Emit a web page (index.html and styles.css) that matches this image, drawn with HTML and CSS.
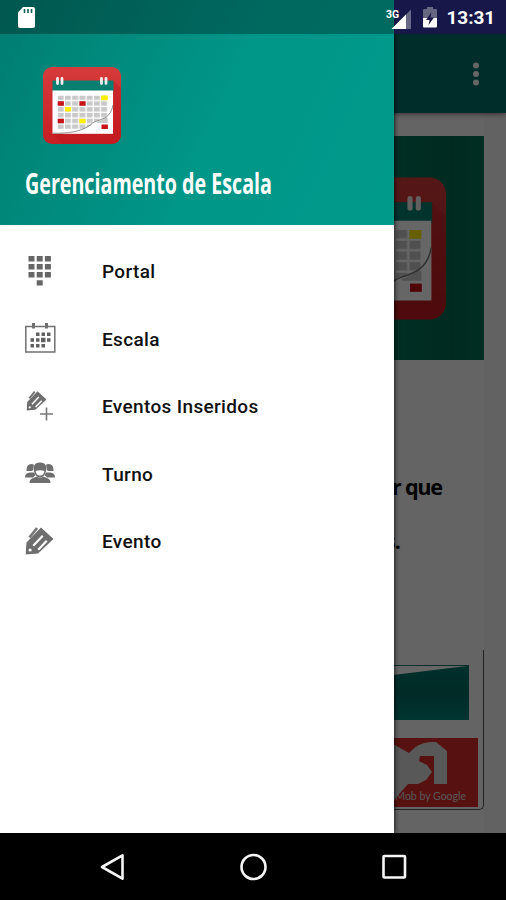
FILE: index.html
```html
<!DOCTYPE html>
<html lang="pt-BR">
<head>
<meta charset="utf-8">
<title>Gerenciamento de Escala</title>
<link rel="stylesheet" href="styles.css">
</head>
<body>
<svg class="defs" aria-hidden="true">
  <defs>
    <linearGradient id="red" x1="0" y1="0" x2="0" y2="1"><stop offset="0" stop-color="#d63b3c"/><stop offset="1" stop-color="#c71e22"/></linearGradient>
    <linearGradient id="banner" x1="0" y1="0" x2="0" y2="1"><stop offset="0" stop-color="#00776b"/><stop offset=".5" stop-color="#006c62"/><stop offset="1" stop-color="#00857a"/></linearGradient>
    <pattern id="cells" x="14.7" y="28.5" width="7.25" height="5.8" patternUnits="userSpaceOnUse"><path fill="#c9c9c9" d="M0 0h6v4.5H0z"/></pattern>
    <symbol id="calendar" viewBox="0 0 78 77">
      <rect width="78" height="77" rx="9" fill="url(#red)"/>
      <path d="M70.500 13.500L78 21v47a9 9 0 0 1-9 9H20L9.500 66.500h61z" fill="#b9151a" opacity=".35"/>
      <path d="M9.500 13.500h61v11h-61z" fill="#087f70"/>
      <path d="M9.500 23.500h60.500v43.200H9.500z" fill="#fff"/>
      <path d="M14.700 28.500h50v33.500h-50z" fill="url(#cells)"/>
      <path d="M58.200 28.500h6.500v4.700h-6.500zM21.900 40.100h6.200v4.500h-6.200zM36.400 51.700h6.200v4.500h-6.200z" fill="#fff000"/>
      <path d="M14.700 34.300h6.200v4.500h-6.200zM36.400 34.300h6.200v4.500h-6.200zM14.700 51.700h6.200v4.500h-6.200z" fill="#c91118"/>
      <path d="M70 38C67 50 60 52 53 54c-4 1-3 3-6 5-11 6-22 7.500-37 7.200h60z" fill="#fff"/>
      <path d="M54 55q6-2 9-5l1.700 1v5H54z" fill="#c9c9c9"/>
      <path d="M70 38C68 50 60 52 54 54c-4 1-5 3-8 5-10 6-21 7.500-36 7.200" fill="none" stroke="#777" stroke-width=".8"/>
      <path d="M58.500 57.500h6.400v4.500h-6.400z" fill="#c91118"/>
      <path d="M14.500 11.500v5M19 11.500v5M58.500 11.500v5M63 11.500v5" stroke="#f4eeee" stroke-width="2.800" stroke-linecap="round"/>
    </symbol>
    <symbol id="pencil" viewBox="0 0 28 28">
      <path fill="#6e6e6e" fill-rule="evenodd" d="M0 28L1 16 15.500 1 28 12.500 12.500 27zM3 23.500a1.600 1.600 0 1 0 3.200 0 1.600 1.600 0 0 0-3.200 0zM7 18.500l9.500-10 1.500 1.400-9.500 10zM12 22.500l8.500-9 1.500 1.400-8.500 9z"/>
      <path d="M4 11L11.500 1.500" stroke="#777" stroke-width="2.800"/>
    </symbol>
  </defs>
</svg>
<div class="phone">
  <main class="page">
    <header class="appbar">
      <svg class="more" viewBox="0 0 6 24"><g fill="#fff"><circle cx="3" cy="3.500" r="3"/><circle cx="3" cy="12" r="3"/><circle cx="3" cy="20.500" r="3"/></g></svg>
    </header>
    <section class="content">
      <div class="hero"><svg class="hero-icon"><use href="#calendar"/></svg></div>
      <div class="copy"><p>r que</p><p class="last">s.</p></div>
      <div class="ad">
        <svg viewBox="0 0 158 160">
          <path d="M0 15h145v55H0z" fill="url(#banner)"/>
          <path d="M0 16h143L69 25 0 35z" fill="#fff"/>
          <path d="M0 88h154v69H0z" fill="#d72b28"/>
          <path d="M69 94l16 9q10-11 22-11h5l11 9v33h-13v-28H96l-1 5 8 4 5 7-6 8-8 4H84L69 151z" fill="#ddd"/>
          <text x="142" y="150" text-anchor="end">AdMob by Google</text>
        </svg>
      </div>
    </section>
  </main>
  <div class="scrim"></div>
  <aside class="drawer">
    <header class="drawer-head">
      <svg class="logo"><use href="#calendar"/></svg>
      <svg class="title" viewBox="0 0 260 44"><text x="0" y="30" textLength="247" lengthAdjust="spacingAndGlyphs">Gerenciamento de Escala</text></svg>
    </header>
    <nav class="menu">
      <a class="item"><svg viewBox="0 0 32 34"><path fill="#666" d="M4.500 1h6v5.500h-6zm8.200 0h6v5.500h-6zm8.200 0h6v5.500h-6zM4.500 9h6v5.500h-6zm8.200 0h6v5.500h-6zm8.200 0h6v5.500h-6zM4.500 17h6v5.500h-6zm8.200 0h6v5.500h-6zm8.200 0h6v5.500h-6zM12.700 25.300h6v5.200h-6z"/></svg><span>Portal</span></a>
      <a class="item"><svg viewBox="0 0 32 34"><path d="M1.800 4.500h29v25.500h-29z" fill="none" stroke="#707070" stroke-width="1.500"/><path d="M9.500 1v5.500M22.500 1v5.500" stroke="#707070" stroke-width="3"/><path fill="#606060" d="M12 10.500h3.500V14H12zm5.500 0H21V14h-3.500zm5.500 0h3.500V14H23zM6.500 16.200H10v3.500H6.500zm5.500 0h3.500v3.500H12zm5-.5h4.500v4.500H17zm6 .5h3.500v3.500H23zM6.500 22H10v3.500H6.500zm5.500 0h3.500v3.500H12zm5.500 0H21v3.500h-3.500z"/></svg><span>Escala</span></a>
      <a class="item"><svg viewBox="0 0 32 34"><use href="#pencil" x="2.500" y="0" width="20" height="21"/><path d="M22.500 17.500v13M16 24h13" stroke="#777" stroke-width="1.600"/></svg><span>Eventos Inseridos</span></a>
      <a class="item"><svg viewBox="0 0 32 34"><g fill="#6e6e6e"><path d="M2.500 13q0-6 5-6 1.500 0 2.500.8L9 13l-1 1H2.500zM29.500 13q0-6-5-6-1.500 0-2.500.8l1 5.200 1 1h5.500zM1 20q0-4 5-4.500h4L11.500 18 9 20.500H1zM31 20q0-4-5-4.500h-4L20.500 18l2.500 2.500h8z"/><path d="M5.500 26q0-4 3.500-5l4-1.500q3 2.500 6 0l4 1.500q3.500 1 3.500 5z"/><path d="M16 5.500c-6 0-7 4-6 9 1 4 3.500 6 6 6s5-2 6-6c1-5 0-9-6-9z"/></g><path d="M11.500 14q4.500-1.500 9 0-.8 4.500-4.500 4.500T11.500 14z" fill="#fff"/></svg><span>Turno</span></a>
      <a class="item"><svg viewBox="0 0 32 34"><use href="#pencil" x="1.500" y="1" width="28" height="29"/></svg><span>Evento</span></a>
    </nav>
  </aside>
  <div class="status">
    <svg class="sd" viewBox="0 0 17 21"><path d="M5 0h10q2 0 2 2v17q0 2-2 2H2q-2 0-2-2V5.500z" fill="#fff"/><path d="M6.500 2v4M10 2v4M13.500 2v4" stroke="#096158" stroke-width="1.600"/></svg>
    <div class="right">
      <svg class="signal" viewBox="0 0 28 24"><path d="M5.500 23L25 3.500V23z" fill="#686987"/><path d="M5.500 23L20 8.500V23z" fill="#fff"/><text x="0" y="12">3G</text></svg>
      <svg class="battery" viewBox="0 0 14 21"><path d="M4 0h6v2h3q1 0 1 1v9H0V3q0-1 1-1h3z" fill="#666781"/><path d="M0 11h14v8.500q0 1-1 1H1q-1 0-1-1z" fill="#fff"/><path d="M8.500 5L3 13h3.500L5.500 18 11 10.500H7.500z" fill="#17174a"/></svg>
      <span class="clock">13:31</span>
    </div>
  </div>
  <footer class="navbar">
    <svg viewBox="0 0 28 28"><path d="M4 14L24.500 2.300v23.400z"/></svg>
    <svg viewBox="0 0 28 28"><circle cx="14.500" cy="14" r="12"/></svg>
    <svg viewBox="0 0 28 28"><rect x="3.500" y="3" width="21.500" height="21.500" rx="1"/></svg>
  </footer>
</div>
</body>
</html>
```
FILE: styles.css
```css
* { box-sizing: border-box; }
body { margin: 0; font-family: Roboto, "Liberation Sans", sans-serif; }
.defs { position: absolute; width: 0; height: 0; }
.phone { position: relative; width: 506px; height: 900px; overflow: hidden; background: #000; }
svg { display: block; flex: none; }

.page { height: 833px; background: #fff; display: flex; flex-direction: column; }
.appbar { position: relative; height: 113px; padding: 34px 27px 0 0; background: #007268; display: flex; align-items: center; justify-content: flex-end; box-shadow: 0 1px 5px rgba(0,0,0,.5); }
.more { width: 6px; height: 24px; }
.content { padding: 23px 22px 0; flex: 1; background: linear-gradient(90deg, #fafafa 484px, #f4f4f4 484px); display: flex; flex-direction: column; }
.hero { height: 224px; padding: 41px 38px; background: linear-gradient(90deg, #00755a 372px, #006a51 430px, #007257); display: flex; justify-content: flex-end; align-items: flex-start; }
.hero-icon { width: 144px; height: 143px; }
.copy { height: 290px; padding: 112px 0 0 370px; font: bold 21.5px/30px "Noto Sans", "Open Sans", sans-serif; letter-spacing: -1.1px; color: #000; }
.copy p { margin: 0; white-space: nowrap; }
.copy .last { margin-top: 24px; margin-left: -7px; }
.ad { align-self: flex-end; width: 160px; height: 160px; border: solid #555; border-width: 0 1.5px 1.5px 0; border-radius: 0 0 5px 0; }
.ad svg { width: 158px; height: 160px; }
.ad text { font: 10.5px Lato, sans-serif; fill: #ddd; }

.scrim { position: absolute; inset: 0 0 67px; background: rgba(0,0,0,.6); }
.drawer { position: absolute; top: 0; left: 0; width: 394px; height: 833px; background: #fff; box-shadow: 0 0 5px #000; }
.drawer-head { height: 225px; padding: 67px 0 0 25px; background: linear-gradient(115deg, #007d72 0, #00897c 25%, #009688 55%, #009a8b 100%); }
.logo { width: 78px; height: 77px; margin-left: 18px; }
.title { width: 260px; height: 44px; margin-top: 20px; }
.title text { font: bold 28px "Open Sans", sans-serif; fill: #fff; }
.menu { padding-top: 13px; }
.item { height: 67.5px; padding-left: 24px; display: flex; align-items: center; gap: 46px; font-size: 19px; font-weight: 500; letter-spacing: .35px; color: #111; }
.item svg { width: 32px; height: 34px; }

.status { position: absolute; top: 0; left: 0; width: 506px; height: 34px; padding: 1px 11px 0 18px; display: flex; align-items: center; justify-content: space-between; background: linear-gradient(90deg, rgba(0,0,0,.3) 394px, #17174a 394px); }
.sd { width: 17px; height: 21px; }
.right { display: flex; align-items: center; }
.signal { width: 28px; height: 24px; }
.signal text { font: bold 10.5px Roboto, sans-serif; fill: #fff; }
.battery { width: 14px; height: 21px; margin: 0 10px 0 9px; }
.clock { font-size: 19px; font-weight: 700; color: #fff; line-height: 34px; letter-spacing: -.1px; padding-top: 1px; }

.navbar { height: 67px; padding: 0 98px; display: flex; align-items: center; justify-content: space-between; background: #000; }
.navbar svg { width: 28px; height: 28px; fill: none; stroke: #f5f5f5; stroke-width: 2.6; stroke-linejoin: round; }
```
